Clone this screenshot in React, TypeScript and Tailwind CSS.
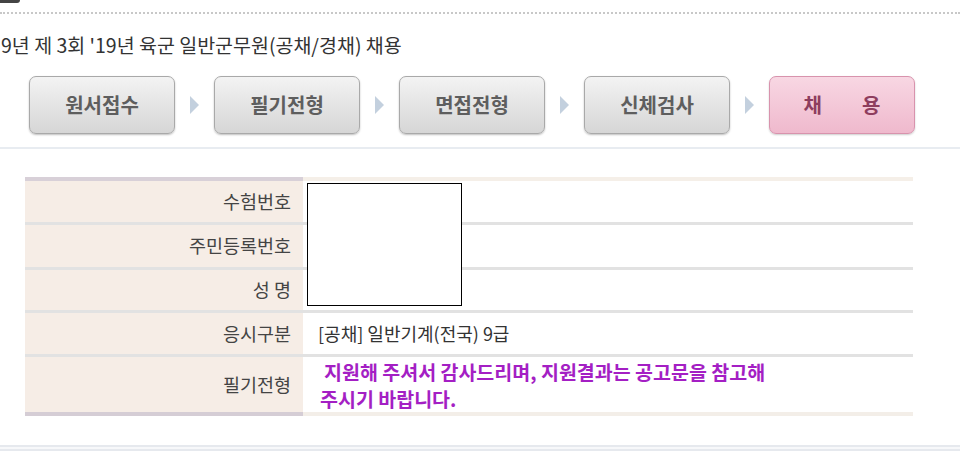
const steps = [
  { label: ["원서접수"], active: false },
  { label: ["필기전형"], active: false },
  { label: ["면접전형"], active: false },
  { label: ["신체검사"], active: false },
  { label: ["채", "용"], active: true },
];

const rows = [
  { label: "수험번호", value: "", h: "h-[41px]" },
  { label: "주민등록번호", value: "", h: "h-[42px]" },
  { label: "성 명", value: "", h: "h-[40px]" },
  { label: "응시구분", value: "[공채] 일반기계(전국) 9급", h: "h-[41px]" },
];

function Arrow() {
  return (
    <svg width="11" height="20" viewBox="0 0 11 20" className="mx-[14px]">
      <path d="M1 1 L10 10 L1 19 Z" fill="#c3d0de" />
    </svg>
  );
}

export default function App() {
  return (
    <div className="relative w-[960px] h-[472px] overflow-hidden bg-white text-[#333] font-['Noto_Sans_CJK_KR','Noto_Sans',sans-serif]">
      <div className="h-[3px] w-[20px] bg-[#444] rounded-br-sm" />
      <div className="mt-[9px] border-t-2 border-dotted border-[#c8c8c8]" />

      <h1 className="mt-[18px] pl-[1px] text-[19.5px] leading-[26px] text-[#333]">9년 제 3회 '19년 육군 일반군무원(공채/경채) 채용</h1>

      <div className="mt-[18px] pl-[29px] flex items-center">
        {steps.map((s, i) => (
          <div key={s.label.join("")} className="flex items-center">
            <div
              className={
                s.active
                  ? "w-[146px] h-[58px] rounded-[7px] border border-[#d893ad] bg-gradient-to-b from-[#f8d7e3] to-[#efb9cd] shadow-[0_1px_2px_rgba(0,0,0,0.2)] flex items-center justify-center gap-[40px] text-[20px] font-bold text-[#8e3d5e]"
                  : "w-[146px] h-[58px] rounded-[7px] border border-[#a9a9a9] bg-gradient-to-b from-[#f3f3f3] to-[#d6d6d6] shadow-[0_1px_2px_rgba(0,0,0,0.25)] flex items-center justify-center text-[20px] font-bold text-[#5e5e5e]"
              }
            >
              {s.label.map((t) => (
                <span key={t}>{t}</span>
              ))}
            </div>
            {i < steps.length - 1 && <Arrow />}
          </div>
        ))}
      </div>

      <div className="mt-[13px] border-t-2 border-[#e8ecf1]" />

      <div className="relative mt-[28px] ml-[25px] w-[888px]">
        <div className="grid grid-cols-[278px_1fr] h-[4px]">
          <div className="bg-[#d8d0d8]" />
          <div className="bg-[#f5efe8]" />
        </div>
        {rows.map((r) => (
          <div key={r.label} className="grid grid-cols-[278px_1fr] border-b-[3px] border-[#e2e2e2]">
            <div className={`${r.h} bg-[#f6ede6] flex items-center justify-end pr-[12px] text-[18.5px] text-[#444]`}>{r.label}</div>
            <div className={`${r.h} bg-white flex items-center pl-[15px] text-[18px] text-[#333]`}>{r.value}</div>
          </div>
        ))}
        <div className="grid grid-cols-[278px_1fr]">
          <div className="h-[55px] bg-[#f6ede6] flex items-center justify-end pr-[12px] text-[18.5px] text-[#444]">필기전형</div>
          <div className="h-[55px] bg-white flex flex-col justify-center pl-[17px] text-[19.5px] leading-[27px] font-bold text-[#a41fc4]">
            <span className="pl-[4px]">지원해 주셔서 감사드리며, 지원결과는 공고문을 참고해</span>
            <span>주시기 바랍니다.</span>
          </div>
        </div>
        <div className="grid grid-cols-[278px_1fr] h-[4px]">
          <div className="bg-[#d5cdd5]" />
          <div className="bg-[#f3eee8]" />
        </div>

        <div className="absolute left-[282px] top-[6px] w-[155px] h-[123px] bg-white border-[1.5px] border-black" />
      </div>

      <div className="mt-[29px] h-[6px] border-t-2 border-b-2 border-[#e6e9ee] bg-[#f7f8fa]" />
    </div>
  );
}
